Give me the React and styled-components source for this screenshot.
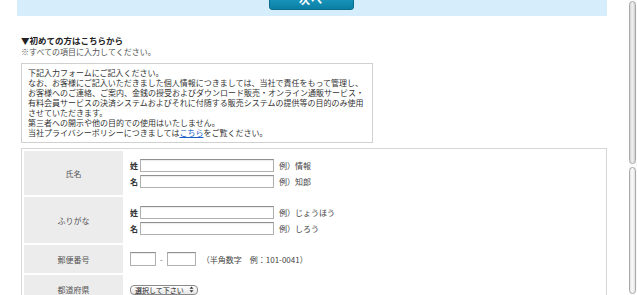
import React from "react";
import styled, { createGlobalStyle } from "styled-components";

const Global = createGlobalStyle`
  html, body { margin: 0; padding: 0; background: #fff; overflow: hidden; }
  body { font-family: "Noto Sans CJK JP", "Noto Sans", sans-serif; color: #333; }
`;

const Page = styled.div`
  display: flex;
  width: 637px;
  height: 295px;
  overflow: hidden;
`;

const Main = styled.div`
  flex: 1;
  padding: 0 22px 0 17px;
  margin-top: -20px;
`;

const Band = styled.div`
  background: #d6eefb;
  display: flex;
  justify-content: center;
  padding: 4px 0 6px;
  padding-right: 2px;
`;

const NextButton = styled.button`
  width: 85px;
  height: 26px;
  border: 1px solid #0b6d8c;
  border-radius: 3px;
  background: linear-gradient(#4cbfdc, #1a97bd 55%, #0b7fa5);
  color: #fff;
  font-family: "Noto Sans CJK JP", sans-serif;
  font-size: 11px;
  font-weight: bold;
  letter-spacing: 1px;
  padding: 6px 0 0;
  display: flex;
  justify-content: center;
  align-items: flex-start;
`;

const Section = styled.div`
  padding: 19px 0 0 4px;
`;

const Heading = styled.div`
  font-size: 8.5px;
  font-weight: bold;
  line-height: 11px;
  color: #222;
`;

const Sub = styled.div`
  font-size: 8px;
  line-height: 11px;
  color: #555;
`;

const Notice = styled.div`
  margin-top: 6px;
  width: 337px;
  border: 1px solid #d0d0d0;
  padding: 4px 7px 4px 6px;
  font-size: 8px;
  line-height: 10px;
  color: #333;
  white-space: nowrap;
`;

const Link = styled.a`
  color: #1a5fc7;
  text-decoration: underline;
`;

const FormTable = styled.table`
  margin-top: 5px;
  width: 586px;
  border: 1px solid #d6d6d6;
  border-spacing: 2px;
  font-size: 8px;
  color: #444;
`;

const HeadCell = styled.th`
  width: 99px;
  background: #ececec;
  font-weight: normal;
  color: #555;
  text-align: center;
  vertical-align: middle;
  padding: 0;
  height: ${(p) => p.$h}px;
`;

const BodyCell = styled.td`
  padding: 0 0 0 5px;
  vertical-align: middle;
`;

const Lines = styled.div`
  display: flex;
  flex-direction: column;
  gap: 3px;
`;

const Line = styled.div`
  display: flex;
  align-items: center;
  height: 13px;
`;

const FieldLabel = styled.span`
  width: 10px;
  font-weight: 600;
  color: #333;
`;

const TextBox = styled.span`
  display: block;
  box-sizing: border-box;
  width: ${(p) => p.$w}px;
  height: ${(p) => p.$hh || 13}px;
  border: 1px solid #b0b0b0;
  border-top-color: #909090;
  box-shadow: inset 0 1px 1px rgba(0, 0, 0, 0.08);
  background: #fff;
`;

const Example = styled.span`
  margin-left: 5px;
  color: #444;
`;

const Dash = styled.span`
  margin: 0 4px;
  color: #666;
`;

const Note = styled.span`
  margin-left: 6px;
  color: #444;
`;

const SelectBox = styled.span`
  display: inline-flex;
  align-items: center;
  box-sizing: border-box;
  height: 10px;
  width: 68px;
  border: 1px solid #8a8a8a;
  border-radius: 4px;
  background: linear-gradient(#fff, #e6e6e6);
  font-size: 7px;
  line-height: 8px;
  color: #222;
  padding: 0 3px 0 4px;
  justify-content: space-between;
`;

const Scrollbar = styled.div`
  width: 9px;
  display: flex;
  flex-direction: column;
  gap: 3px;
  padding: 1px 1px 1px 0;
  box-sizing: border-box;
  background: #fafafa;
`;

const Capsule = styled.div`
  flex: ${(p) => p.$grow};
  border: 1px solid #a9a9a9;
  border-radius: 4px;
  background: ${(p) =>
    p.$thumb
      ? "linear-gradient(to right, #d4d4d4, #f2f2f2 45%, #cfcfcf)"
      : "linear-gradient(to right, #e4e4e4, #fbfbfb 45%, #e2e2e2)"};
`;

function Arrows() {
  return (
    <svg width="5" height="7" viewBox="0 0 5 7">
      <path d="M2.5 0.5 L4.5 2.7 L0.5 2.7 Z" fill="#333" />
      <path d="M2.5 6.5 L4.5 4.3 L0.5 4.3 Z" fill="#333" />
    </svg>
  );
}

function NameRow({ title, h, ex1, ex2 }) {
  return (
    <tr>
      <HeadCell $h={h}>{title}</HeadCell>
      <BodyCell>
        <Lines>
          <Line>
            <FieldLabel>姓</FieldLabel>
            <TextBox $w={134} />
            <Example>{ex1}</Example>
          </Line>
          <Line>
            <FieldLabel>名</FieldLabel>
            <TextBox $w={134} />
            <Example>{ex2}</Example>
          </Line>
        </Lines>
      </BodyCell>
    </tr>
  );
}

export default function App() {
  return (
    <>
      <Global />
      <Page>
        <Main>
          <Band>
            <NextButton>次へ</NextButton>
          </Band>
          <Section>
            <Heading>▼初めての方はこちらから</Heading>
            <Sub>※すべての項目に入力してください。</Sub>
            <Notice>
              下記入力フォームにご記入ください。
              <br />
              なお、お客様にご記入いただきました個人情報につきましては、当社で責任をもって管理し、
              <br />
              お客様へのご連絡、ご案内、金銭の授受およびダウンロード販売・オンライン通販サービス・
              <br />
              有料会員サービスの決済システムおよびそれに付随する販売システムの提供等の目的のみ使用
              <br />
              させていただきます。
              <br />
              第三者への開示や他の目的での使用はいたしません。
              <br />
              当社プライバシーポリシーにつきましては<Link href="#">こちら</Link>をご覧ください。
            </Notice>
            <FormTable>
              <tbody>
                <NameRow title="氏名" h={44} ex1="例）情報" ex2="例）知郎" />
                <NameRow title="ふりがな" h={46} ex1="例）じょうほう" ex2="例）しろう" />
                <tr>
                  <HeadCell $h={28}>郵便番号</HeadCell>
                  <BodyCell>
                    <Line>
                      <TextBox $w={26} $hh={14} />
                      <Dash>-</Dash>
                      <TextBox $w={29} $hh={14} />
                      <Note>（半角数字　例：101-0041）</Note>
                    </Line>
                  </BodyCell>
                </tr>
                <tr>
                  <HeadCell $h={28}>都道府県</HeadCell>
                  <BodyCell>
                    <SelectBox>
                      選択して下さい
                      <Arrows />
                    </SelectBox>
                  </BodyCell>
                </tr>
              </tbody>
            </FormTable>
          </Section>
        </Main>
        <Scrollbar>
          <Capsule $grow={163} $thumb />
          <Capsule $grow={126} />
        </Scrollbar>
      </Page>
    </>
  );
}
